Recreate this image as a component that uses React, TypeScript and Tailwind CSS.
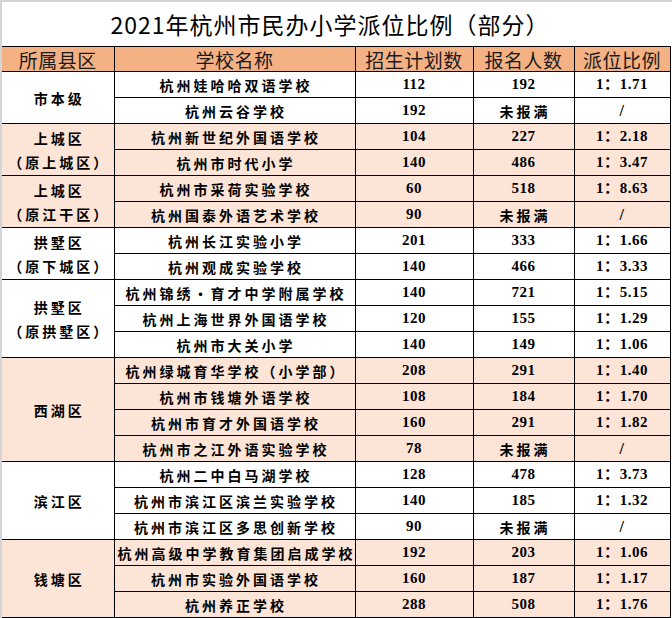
import React from 'react';

type School = { name: string; plan: string; signup: string; ratio: string };
type District = { lines: string[]; pink: boolean; schools: School[] };

const districts: District[] = [
  {
    lines: ['市本级'],
    pink: false,
    schools: [
      { name: '杭州娃哈哈双语学校', plan: '112', signup: '192', ratio: '1.71' },
      { name: '杭州云谷学校', plan: '192', signup: '未报满', ratio: '' },
    ],
  },
  {
    lines: ['上城区', '（原上城区）'],
    pink: true,
    schools: [
      { name: '杭州新世纪外国语学校', plan: '104', signup: '227', ratio: '2.18' },
      { name: '杭州市时代小学', plan: '140', signup: '486', ratio: '3.47' },
    ],
  },
  {
    lines: ['上城区', '（原江干区）'],
    pink: true,
    schools: [
      { name: '杭州市采荷实验学校', plan: '60', signup: '518', ratio: '8.63' },
      { name: '杭州国泰外语艺术学校', plan: '90', signup: '未报满', ratio: '' },
    ],
  },
  {
    lines: ['拱墅区', '（原下城区）'],
    pink: false,
    schools: [
      { name: '杭州长江实验小学', plan: '201', signup: '333', ratio: '1.66' },
      { name: '杭州观成实验学校', plan: '140', signup: '466', ratio: '3.33' },
    ],
  },
  {
    lines: ['拱墅区', '（原拱墅区）'],
    pink: false,
    schools: [
      { name: '杭州锦绣·育才中学附属学校', plan: '140', signup: '721', ratio: '5.15' },
      { name: '杭州上海世界外国语学校', plan: '120', signup: '155', ratio: '1.29' },
      { name: '杭州市大关小学', plan: '140', signup: '149', ratio: '1.06' },
    ],
  },
  {
    lines: ['西湖区'],
    pink: true,
    schools: [
      { name: '杭州绿城育华学校（小学部）', plan: '208', signup: '291', ratio: '1.40' },
      { name: '杭州市钱塘外语学校', plan: '108', signup: '184', ratio: '1.70' },
      { name: '杭州市育才外国语学校', plan: '160', signup: '291', ratio: '1.82' },
      { name: '杭州市之江外语实验学校', plan: '78', signup: '未报满', ratio: '' },
    ],
  },
  {
    lines: ['滨江区'],
    pink: false,
    schools: [
      { name: '杭州二中白马湖学校', plan: '128', signup: '478', ratio: '3.73' },
      { name: '杭州市滨江区滨兰实验学校', plan: '140', signup: '185', ratio: '1.32' },
      { name: '杭州市滨江区多思创新学校', plan: '90', signup: '未报满', ratio: '' },
    ],
  },
  {
    lines: ['钱塘区'],
    pink: true,
    schools: [
      { name: '杭州高级中学教育集团启成学校', plan: '192', signup: '203', ratio: '1.06' },
      { name: '杭州市实验外国语学校', plan: '160', signup: '187', ratio: '1.17' },
      { name: '杭州养正学校', plan: '288', signup: '508', ratio: '1.76' },
    ],
  },
];

const cjk = "font-['Noto_Sans_CJK_SC',sans-serif]";
const num = "font-['Liberation_Serif','Noto_Sans_CJK_SC',serif]";

export default function App() {
  return (
    <div className="w-[672px] h-[618px] bg-white overflow-hidden border-t-2 border-l-2 border-[#d4d4d4] text-black">
      {/* Title */}
      <div className={`h-[44px] w-[668px] flex items-center justify-center pr-3 text-[23px] tracking-[1px] ${cjk}`}>
        2021年杭州市民办小学派位比例（部分）
      </div>

      <table className="w-[668px] table-fixed border-collapse">
        <colgroup>
          <col className="w-[112px]" />
          <col className="w-[241px]" />
          <col className="w-[118px]" />
          <col className="w-[101px]" />
          <col className="w-[96px]" />
        </colgroup>
        <thead>
          <tr className={`h-[25px] bg-[#f4b183] text-[19px] leading-none text-[#1a1a1a] ${cjk}`}>
            <th className="border border-black border-l-0 font-normal tracking-[0.5px]">所属县区</th>
            <th className="border border-black font-normal tracking-[0.5px]">学校名称</th>
            <th className="border border-black font-normal tracking-[0.5px]">招生计划数</th>
            <th className="border border-black font-normal tracking-[0.5px]">报名人数</th>
            <th className="border border-black font-normal tracking-[0.5px]">派位比例</th>
          </tr>
        </thead>
        <tbody>
          {districts.map((d) =>
            d.schools.map((s, i) => (
              <tr key={s.name} className={`h-[26px] ${d.pink ? 'bg-[#fce4d6]' : 'bg-white'}`}>
                {i === 0 && (
                  <td
                    rowSpan={d.schools.length}
                    className={`border border-black border-l-0 text-center text-[14px] font-bold leading-[24px] tracking-[3px] pl-[3px] ${cjk}`}
                  >
                    {d.lines.map((l) => (
                      <div key={l}>{l}</div>
                    ))}
                  </td>
                )}
                <td className={`border border-black text-center text-[14px] font-bold leading-none tracking-[3px] pl-[3px] whitespace-nowrap ${cjk}`}>
                  {s.name}
                </td>
                <td className={`border border-black text-center text-[15px] font-bold leading-none tracking-[0.5px] ${num}`}>
                  {s.plan}
                </td>
                <td
                  className={`border border-black text-center font-bold leading-none ${
                    s.signup === '未报满' ? `text-[14px] tracking-[3px] pl-[3px] ${cjk}` : `text-[15px] tracking-[0.5px] ${num}`
                  }`}
                >
                  {s.signup}
                </td>
                <td className={`border border-black text-center text-[15px] font-bold leading-none tracking-[0.5px] whitespace-nowrap ${num}`}>
                  {s.ratio ? (
                    <>
                      1<span className="font-bold">：</span>
                      {s.ratio}
                    </>
                  ) : (
                    <span className="text-[16px]">/</span>
                  )}
                </td>
              </tr>
            ))
          )}
        </tbody>
      </table>
    </div>
  );
}
